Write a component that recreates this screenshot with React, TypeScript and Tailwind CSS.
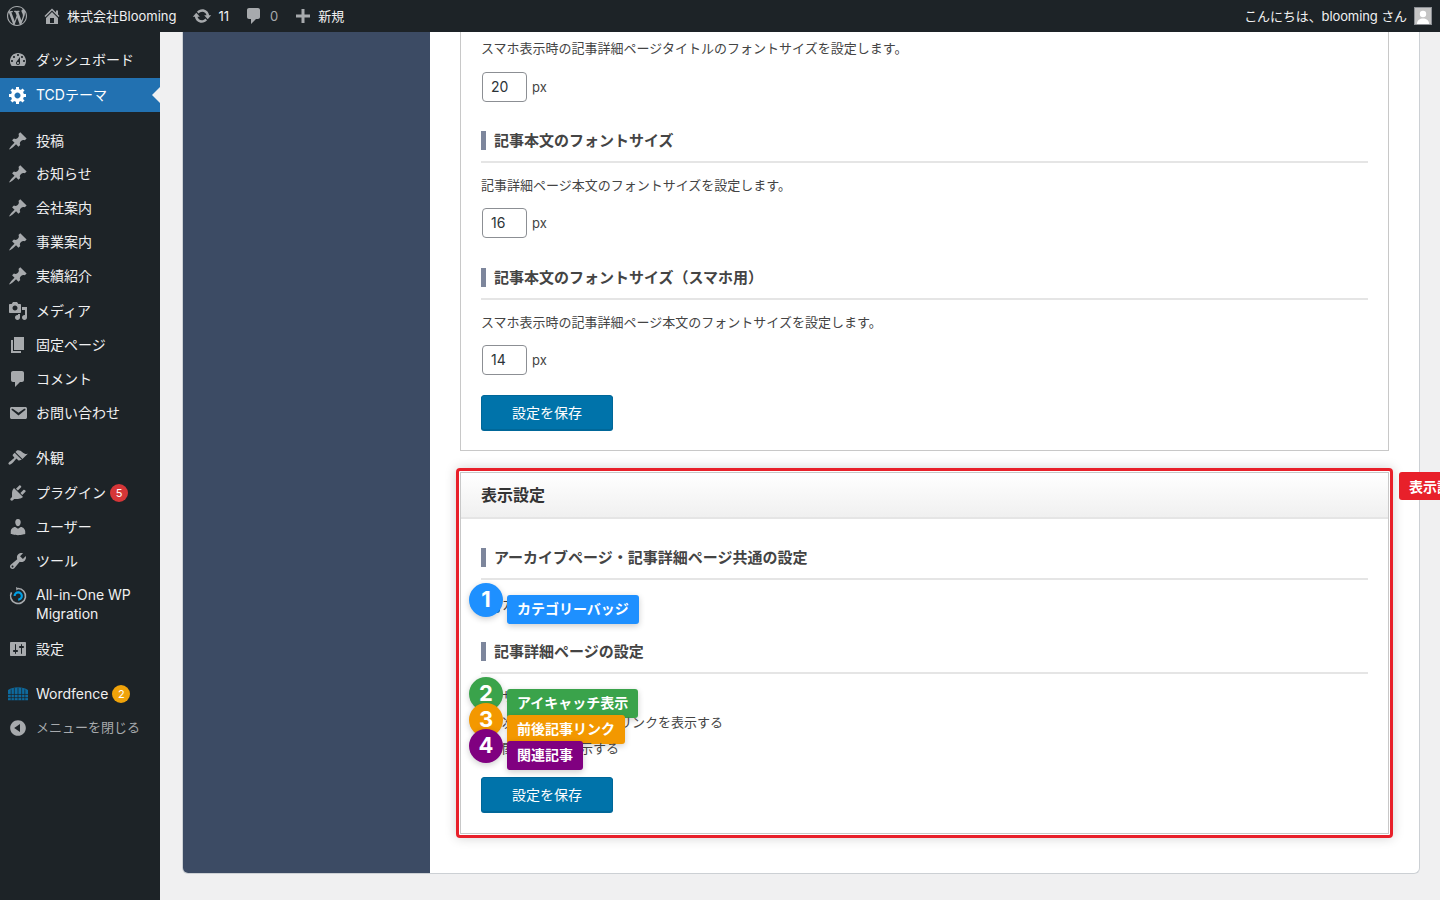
import type { ReactNode } from "react";

const icons = {
  wp: "M20 10c0-5.51-4.49-10-10-10C4.48 0 0 4.49 0 10c0 5.52 4.48 10 10 10 5.51 0 10-4.48 10-10zM7.78 15.37L4.37 6.22c.55-.02 1.17-.08 1.17-.08.5-.06.44-1.13-.06-1.11 0 0-1.45.11-2.37.11-.18 0-.37 0-.58-.01C4.12 2.69 6.87 1.11 10 1.11c2.33 0 4.45.87 6.05 2.34-.68-.11-1.65.39-1.65 1.58 0 .74.45 1.36.9 2.1.35.61.55 1.36.55 2.46 0 1.49-1.4 5-1.4 5l-3.03-8.37c.54-.02.82-.17.82-.17.5-.05.44-1.25-.06-1.22 0 0-1.44.12-2.38.12-.87 0-2.33-.12-2.33-.12-.5-.03-.56 1.2-.06 1.22l.92.08 1.26 3.41zM17.41 10c.24-.64.74-1.87.43-4.25.7 1.29 1.05 2.71 1.05 4.25 0 3.29-1.73 6.24-4.4 7.78.97-2.59 1.94-5.2 2.92-7.78zM6.1 18.09C3.12 16.65 1.11 13.53 1.11 10c0-1.3.23-2.48.72-3.59C3.25 10.3 4.67 14.2 6.1 18.09zm4.03-6.63l2.58 6.98c-.86.29-1.76.45-2.71.45-.79 0-1.57-.11-2.29-.33.81-2.38 1.62-4.74 2.42-7.1z",
  home: "M16 8.5l1.53 1.53-1.06 1.06L10 4.62l-6.47 6.47-1.06-1.06L10 2.5l4 4v-2h2v4zm-6-2.46l6 5.99V18H4v-5.97zM12 17v-5H8v5h4z",
  update: "M10.2 3.28c3.53 0 6.43 2.61 6.92 6h2.08l-3.5 4-3.5-4h2.32c-.45-1.97-2.21-3.44-4.32-3.44-1.45 0-2.73.71-3.54 1.78L4.95 5.66C6.23 4.2 8.11 3.28 10.2 3.28zm-.4 13.44c-3.52 0-6.43-2.61-6.92-6H.8l3.5-4c1.17 1.33 2.33 2.67 3.5 4H5.48c.45 1.97 2.21 3.44 4.32 3.44 1.45 0 2.73-.71 3.54-1.78l1.71 1.95c-1.28 1.46-3.15 2.39-5.25 2.39z",
  comment: "M5 2h9c1.1 0 2 .9 2 2v7c0 1.1-.9 2-2 2h-2l-5 5v-5H5c-1.1 0-2-.9-2-2V4c0-1.1.9-2 2-2z",
  plus: "M17 8.5v3h-5.5V17h-3v-5.5H3v-3h5.5V3h3v5.5z",
  dashboard: "M3.76 16h12.48c1.1-1.37 1.76-3.11 1.76-5 0-4.42-3.58-8-8-8s-8 3.58-8 8c0 1.89.66 3.63 1.76 5zM10 4c.55 0 1 .45 1 1s-.45 1-1 1-1-.45-1-1 .45-1 1-1zM6 6c.55 0 1 .45 1 1s-.45 1-1 1-1-.45-1-1 .45-1 1-1zm8 0c.55 0 1 .45 1 1s-.45 1-1 1-1-.45-1-1 .45-1 1-1zm-5.37 5.55L12 7v6c0 1.1-.9 2-2 2s-2-.9-2-2c0-.57.24-1.08.63-1.45zM4 10c.55 0 1 .45 1 1s-.45 1-1 1-1-.45-1-1 .45-1 1-1zm12 0c.55 0 1 .45 1 1s-.45 1-1 1-1-.45-1-1 .45-1 1-1zm-5 3c0-.55-.45-1-1-1s-1 .45-1 1 .45 1 1 1 1-.45 1-1z",
  gear: "M18 12h-2.18c-.17.7-.44 1.35-.81 1.93l1.54 1.54-2.1 2.1-1.54-1.54c-.58.36-1.23.63-1.91.79V19H8v-2.18c-.68-.16-1.33-.43-1.91-.79l-1.54 1.54-2.12-2.12 1.54-1.54c-.36-.58-.63-1.23-.79-1.91H1V9.03h2.17c.16-.7.44-1.35.8-1.94L2.43 5.55l2.1-2.1 1.54 1.54c.58-.37 1.24-.64 1.93-.81V2h3v2.18c.68.16 1.33.43 1.91.79l1.54-1.54 2.12 2.12-1.54 1.54c.36.59.64 1.24.8 1.94H18V12zm-8.5 1.5c1.66 0 3-1.34 3-3s-1.34-3-3-3-3 1.34-3 3 1.34 3 3 3z",
  pin: "M10.44 3.02l1.82-1.82 6.36 6.35-1.83 1.82c-1.05-.68-2.48-.57-3.41.36l-.75.75c-.92.93-1.04 2.35-.35 3.41l-1.83 1.82-2.41-2.41-2.8 2.79c-.42.42-3.38 2.71-3.8 2.29s1.86-3.39 2.28-3.81l2.79-2.79L4.1 9.36l1.83-1.82c1.05.69 2.48.57 3.4-.36l.75-.75c.93-.92 1.05-2.35.36-3.41z",
  media: "M13 11V4c0-.55-.45-1-1-1h-1.67L9 1H5L3.67 3H2c-.55 0-1 .45-1 1v7c0 .55.45 1 1 1h10c.55 0 1-.45 1-1zM7 4.5c1.38 0 2.5 1.12 2.5 2.5S8.38 9.5 7 9.5 4.5 8.38 4.5 7 5.62 4.5 7 4.5zM14 6h5v10.5c0 1.38-1.12 2.5-2.5 2.5S14 17.88 14 16.5s1.12-2.5 2.5-2.5c.17 0 .34.02.5.05V9h-3V6zm-4 8.05V13h2v3.5c0 1.38-1.12 2.5-2.5 2.5S7 17.88 7 16.5 8.12 14 9.5 14c.17 0 .34.02.5.05z",
  page: "M6 15V2h10v13H6zm-1 1h8v2H3V5h2v11z",
  mail: "M3.87 4h13.25C18.37 4 19 4.59 19 5.79v8.42c0 1.19-.63 1.79-1.88 1.79H3.87c-1.25 0-1.88-.6-1.88-1.79V5.79c0-1.2.63-1.79 1.88-1.79zm6.62 8.6l6.74-5.53c.24-.2.43-.66.13-1.07-.29-.41-.82-.42-1.17-.17l-5.7 3.86L4.8 5.83c-.35-.25-.88-.24-1.17.17-.3.41-.11.87.13 1.07z",
  brush: "M14.48 11.06L7.41 3.99l1.5-1.5c.5-.56 2.3-.47 3.51.32 1.21.8 1.43 1.28 2.91 2.1 1.18.64 2.45 1.26 4.45.85zm-.71.71L6.7 4.7 4.93 6.47c-.39.39-.39 1.02 0 1.41l1.06 1.06c.39.39.39 1.03 0 1.42-.6.6-1.43 1.11-2.21 1.69-.35.26-.7.53-1.01.84C1.43 13.23.4 14.91.4 15.5c0 .33.15.62.39.86.23.24.53.38.86.38.59 0 2.27-1.03 3.6-2.37.31-.31.58-.66.84-1.01.58-.78 1.09-1.61 1.69-2.21.39-.39 1.03-.39 1.42 0l1.06 1.06c.39.39 1.02.39 1.41 0z",
  plugin: "M13.11 4.36L9.87 7.6 8 5.73l3.24-3.24c.35-.34 1.05-.2 1.56.32.52.51.66 1.21.31 1.55zm-8 1.77l.91-1.12 9.01 9.01-1.19.84c-.71.71-2.63 1.16-3.82 1.16H6.14L4.9 17.26c-.59.59-1.54.59-2.12 0-.59-.58-.59-1.53 0-2.12l1.24-1.24v-3.88c0-1.13.4-3.19 1.09-3.89zm7.26 3.97l3.24-3.24c.34-.35 1.04-.21 1.55.31.52.51.66 1.21.31 1.55l-3.24 3.25z",
  user: "M10 9.25c-2.27 0-2.73-3.44-2.73-3.44C7 4.02 7.82 2 9.97 2c2.16 0 2.98 2.02 2.71 3.81 0 0-.41 3.44-2.68 3.44zm0 2.57L12.72 10c2.39 0 4.52 2.33 4.52 4.53v2.49s-3.65 1.13-7.24 1.13c-3.65 0-7.24-1.13-7.24-1.13v-2.49c0-2.25 1.94-4.48 4.47-4.48z",
  tool: "M16.68 9.77c-1.34 1.34-3.3 1.67-4.95.99l-5.41 6.52c-.99.99-2.59.99-3.58 0s-.99-2.59 0-3.57l6.52-5.42c-.68-1.65-.35-3.61.99-4.95 1.28-1.28 3.12-1.62 4.72-1.06l-2.89 2.89 2.82 2.82 2.86-2.87c.53 1.58.18 3.39-1.08 4.65zM3.81 16.21c.4.39 1.04.39 1.43 0 .4-.4.4-1.04 0-1.43-.39-.4-1.03-.4-1.43 0-.39.39-.39 1.03 0 1.43z",
  settings: "M18 16V4c0-.55-.45-1-1-1H3c-.55 0-1 .45-1 1v12c0 .55.45 1 1 1h14c.55 0 1-.45 1-1zM8 11h1c.55 0 1 .45 1 1s-.45 1-1 1H8v1.5c0 .28-.22.5-.5.5s-.5-.22-.5-.5V13H6c-.55 0-1-.45-1-1s.45-1 1-1h1V5.5c0-.28.22-.5.5-.5s.5.22.5.5V11zm5-2h-1c-.55 0-1-.45-1-1s.45-1 1-1h1V5.5c0-.28.22-.5.5-.5s.5.22.5.5V7h1c.55 0 1 .45 1 1s-.45 1-1 1h-1v5.5c0 .28-.22.5-.5.5s-.5-.22-.5-.5V9z",
  collapse: "M10 2.16c4.33 0 7.84 3.51 7.84 7.84s-3.51 7.84-7.84 7.84S2.16 14.33 2.16 10 5.71 2.16 10 2.16zm2 11.72V6.12L6.18 9.97z",
};

const Icon = ({ d, className }: { d: string; className: string }) => (
  <svg viewBox="0 0 20 20" className={className} fill="currentColor">
    <path d={d} />
  </svg>
);

const AioLogo = () => (
  <svg viewBox="0 0 20 20" className="w-5 h-5" fill="none">
    <path d="M10 2.5a7.5 7.5 0 1 1-6.5 3.8" stroke="#a7aaad" strokeWidth="1.6" />
    <path d="M8 1l3 1.6L8.4 4.6z" fill="#a7aaad" />
    <path d="M6.6 10a3.6 3.6 0 1 1 3.6 3.6" stroke="#00a0e6" strokeWidth="2.2" />
  </svg>
);

const WordfenceLogo = () => (
  <svg viewBox="0 0 22 16" className="w-[20px] h-[16px]">
    <path d="M0 3.500C3 1.500 7 .5 11 .5s8 1 11 3V15H0z" fill="#0e6a9e" />
    <path d="M3.500 3v12M7 1.500V15M11 1v14M15 1.500V15M18.500 3v12M0 8.500h22M0 12h22" stroke="#1d2327" strokeWidth="0.8" />
  </svg>
);

type MenuEntry = {
  label: string;
  icon?: keyof typeof icons;
  logo?: ReactNode;
  top?: string;
  badge?: { text: string; color: string };
  twoLines?: boolean;
};

const menu: MenuEntry[] = [
  { label: "ダッシュボード", icon: "dashboard" },
  { label: "TCDテーマ", icon: "gear", top: "mt-px" },
  { label: "投稿", icon: "pin", top: "mt-3" },
  { label: "お知らせ", icon: "pin", top: "-mt-px" },
  { label: "会社案内", icon: "pin" },
  { label: "事業案内", icon: "pin" },
  { label: "実績紹介", icon: "pin" },
  { label: "メディア", icon: "media", top: "mt-px" },
  { label: "固定ページ", icon: "page" },
  { label: "コメント", icon: "comment" },
  { label: "お問い合わせ", icon: "mail" },
  { label: "外観", icon: "brush", top: "mt-[11px]" },
  { label: "プラグイン", icon: "plugin", top: "mt-px", badge: { text: "5", color: "bg-[#d63638]" } },
  { label: "ユーザー", icon: "user" },
  { label: "ツール", icon: "tool" },
  { label: "All-in-One WP Migration", logo: <AioLogo />, twoLines: true },
  { label: "設定", icon: "settings" },
  { label: "Wordfence", logo: <WordfenceLogo />, top: "mt-[11px]", badge: { text: "2", color: "bg-[#f0a30a]" } },
];

const Sidebar = () => (
  <aside className="w-40 shrink-0 bg-[#1d2327] pt-[11px] text-[14px] text-[#f0f0f1]">
    {menu.map((item) => {
      const active = item.label === "TCDテーマ";
      return (
        <div key={item.label} className={item.top ?? ""}>
          <div
            className={`relative flex pl-1 ${item.twoLines ? "py-2 items-start" : "h-[34px] items-center"} ${active ? "bg-[#2271b1] text-white" : ""}`}
          >
            <span className={`w-7 shrink-0 flex justify-center ${active ? "text-white" : "text-[#a7aaad]"}`}>
              {item.icon ? <Icon d={icons[item.icon]} className="w-5 h-5" /> : item.logo}
            </span>
            <span className={`ml-1 -translate-y-px ${item.twoLines ? "leading-[19px] w-[110px]" : ""}`}>{item.label}</span>
            {item.badge && (
              <span className={`ml-1 w-[18px] h-[18px] rounded-full ${item.badge.color} text-white text-[11px] flex items-center justify-center`}>
                {item.badge.text}
              </span>
            )}
            {active && (
              <span className="absolute right-0 top-[9px] border-y-[8px] border-y-transparent border-r-[8px] border-r-[#f0f0f1]" />
            )}
          </div>
        </div>
      );
    })}
    <div className="flex items-center pl-1 h-[34px] text-[#a7aaad] text-[13px]">
      <span className="w-7 shrink-0 flex justify-center">
        <Icon d={icons.collapse} className="w-5 h-5" />
      </span>
      <span className="ml-1">メニューを閉じる</span>
    </div>
  </aside>
);

const AdminBar = () => (
  <header className="h-8 shrink-0 bg-[#1d2327] flex items-center text-[13px] text-[#f0f0f1]">
    <Icon d={icons.wp} className="w-5 h-5 ml-[7px] text-[#a7aaad]" />
    <Icon d={icons.home} className="w-5 h-5 ml-[15px] text-[#a7aaad]" />
    <span className="ml-[5px] translate-y-px">株式会社Blooming</span>
    <Icon d={icons.update} className="w-5 h-5 ml-[16px] text-[#a7aaad]" />
    <span className="ml-[6px] translate-y-px">11</span>
    <Icon d={icons.comment} className="w-5 h-5 ml-[15px] text-[#a7aaad]" />
    <span className="ml-[6px] translate-y-px text-[#a7aaad]">0</span>
    <Icon d={icons.plus} className="w-5 h-5 ml-[15px] text-[#a7aaad]" />
    <span className="ml-[5px] translate-y-px">新規</span>
    <span className="ml-auto translate-y-px tracking-[-0.1px]">こんにちは、blooming さん</span>
    <span className="ml-[7px] mr-[8px] w-[18px] h-[18px] bg-[#c4c4c4] border border-[#8c8f94] overflow-hidden flex items-end justify-center">
      <svg viewBox="0 0 16 16" className="w-4 h-4">
        <circle cx="8" cy="6" r="3.2" fill="#fff" />
        <path d="M2 16c0-4 3-5.500 6-5.500s6 1.500 6 5.500z" fill="#fff" />
      </svg>
    </span>
  </header>
);

const SectionTitle = ({ children }: { children: ReactNode }) => (
  <h4 className="pb-[11px] border-b-2 border-[#e5e5e5]">
    <span className="block h-[19px] border-l-[5px] border-[#7d869c] pl-2 text-[15px] leading-[19px] font-bold text-[#444]">
      {children}
    </span>
  </h4>
);

const Description = ({ children }: { children: ReactNode }) => (
  <p className="h-5 text-[13px] leading-5 text-[#444]">{children}</p>
);

const SizeField = ({ value }: { value: string }) => (
  <div className="flex items-center ml-px">
    <span className="w-[45px] h-[30px] bg-white border border-[#8c8f94] rounded-[4px] pl-[8px] text-[14px] leading-[28px] text-[#2c3338]">
      {value}
    </span>
    <span className="ml-[5px] translate-y-px text-[13px] text-[#444]">px</span>
  </div>
);

const SaveButton = () => (
  <button className="block w-[132px] h-[35px] pb-px bg-[#0073aa] border border-[#006799] rounded-[3px] text-[14px] text-white shadow-[0_1px_0_#006799]">
    設定を保存
  </button>
);

// numbered marker and label laid over a setting row
const Callout = ({ no, label, color, top }: { no: string; label: string; color: string; top: number }) => (
  <div className="absolute left-[-12px] flex" style={{ top }}>
    <span className={`w-[34px] h-[34px] pb-px rounded-full ${color} text-white text-[22px] font-bold flex items-center justify-center shadow-[0_2px_6px_rgba(0,0,0,0.2)]`}>
      {no}
    </span>
    <span className={`ml-1 mt-3 h-[29px] px-[10px] rounded-[3px] ${color} text-white text-[14px] font-bold leading-[27px] whitespace-nowrap shadow-[0_2px_6px_rgba(0,0,0,0.2)]`}>
      {label}
    </span>
  </div>
);

const CheckRow = ({ text, children }: { text: string; children: ReactNode }) => (
  <div className="relative flex items-center h-5 text-[13px] text-[#444]">
    <span className="w-4 h-4 rounded-[3px] bg-[#1473c4] ml-[3px] mr-[2px]" />
    {text}
    {children}
  </div>
);

const App = () => {
  return (
    <div className="h-[900px] overflow-hidden flex flex-col bg-[#f0f0f1] [font-family:'Inter','Noto_Sans_CJK_JP',sans-serif]">
      <AdminBar />
      <div className="flex flex-1 min-h-0">
        <Sidebar />
        <main className="flex-1 min-w-0 pl-[22px] pr-5">
          <div className="flex bg-white border-x border-b border-[#ccd0d4] rounded-b-[6px]">
            <div className="w-[247px] shrink-0 bg-[#3c4b64] rounded-bl-[5px]" />
            <div className="flex-1 min-w-0 px-[30px] pb-[35px]">
              <section className="border-x border-b border-[#c8c8c8] px-5 pb-5">
                <div className="pt-[6px]">
                  <Description>スマホ表示時の記事詳細ページタイトルのフォントサイズを設定します。</Description>
                </div>
                <div className="mt-[14px]">
                  <SizeField value="20" />
                </div>
                <div className="mt-[29px]">
                  <SectionTitle>記事本文のフォントサイズ</SectionTitle>
                </div>
                <div className="mt-3">
                  <Description>記事詳細ページ本文のフォントサイズを設定します。</Description>
                </div>
                <div className="mt-[13px]">
                  <SizeField value="16" />
                </div>
                <div className="mt-[30px]">
                  <SectionTitle>記事本文のフォントサイズ（スマホ用）</SectionTitle>
                </div>
                <div className="mt-3">
                  <Description>スマホ表示時の記事詳細ページ本文のフォントサイズを設定します。</Description>
                </div>
                <div className="mt-[13px]">
                  <SizeField value="14" />
                </div>
                <div className="mt-5">
                  <SaveButton />
                </div>
              </section>

              <div className="relative mt-[17px] -mx-1 border-[3px] border-[#e8202a] rounded-[4px] p-px shadow-[0_0_12px_rgba(0,0,0,0.18)]">
                <section className="border border-[#c8c8c8]">
                  <div className="h-[46px] bg-gradient-to-b from-white to-[#f0f0f0] border-b-2 border-[#e5e5e5] pl-5 text-[16px] font-bold leading-[44px] text-[#333]">
                    表示設定
                  </div>
                  <div className="px-5 pb-[21px]">
                    <div className="mt-[29px]">
                      <SectionTitle>アーカイブページ・記事詳細ページ共通の設定</SectionTitle>
                    </div>
                    <div className="mt-[15px]">
                      <CheckRow text="カテゴリーを表示する">
                        <Callout no="1" label="カテゴリーバッジ" color="bg-[#1e90ff]" top={-12} />
                      </CheckRow>
                    </div>
                    <div className="mt-[27px]">
                      <SectionTitle>記事詳細ページの設定</SectionTitle>
                    </div>
                    <div className="mt-[13px] flex flex-col gap-[6px]">
                      <CheckRow text="サムネイルを表示する">
                        <Callout no="2" label="アイキャッチ表示" color="bg-[#3aa34b]" top={-10} />
                      </CheckRow>
                      <CheckRow text="次の記事・前の記事リンクを表示する">
                        <Callout no="3" label="前後記事リンク" color="bg-[#f39800]" top={-10} />
                      </CheckRow>
                      <CheckRow text="関連記事を表示する">
                        <Callout no="4" label="関連記事" color="bg-[#800080]" top={-10} />
                      </CheckRow>
                    </div>
                    <div className="mt-[18px]">
                      <SaveButton />
                    </div>
                  </div>
                </section>
                <div className="absolute left-[calc(100%+9px)] top-[1px] w-[80px] h-[28px] rounded-[3px] bg-[#e8202a] pl-[10px] text-[14px] font-bold leading-[29px] text-white">
                  表示設定
                </div>
              </div>
            </div>
          </div>
        </main>
      </div>
    </div>
  );
};

export default App;
